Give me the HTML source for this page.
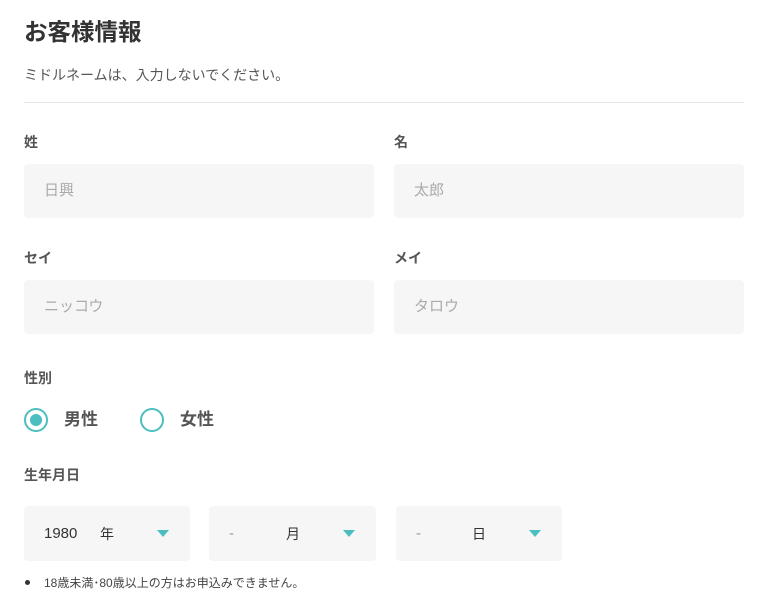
<!DOCTYPE html>
<html><head><meta charset="utf-8"><style>
*{margin:0;padding:0;box-sizing:border-box}
body{width:783px;height:601px;background:#fff;font-family:"Liberation Sans","Noto Sans CJK JP",sans-serif;color:#333;position:relative;overflow:hidden}
.a{position:absolute;white-space:nowrap}
.lbl{font-size:14px;font-weight:bold;color:#555;line-height:20px}
.in{position:absolute;background:#f6f6f6;border-radius:4px;height:54px}
.ph{position:absolute;font-size:15px;color:#aaa;line-height:20px;top:17px;left:20px}
.tri{position:absolute;width:0;height:0;border-left:6px solid transparent;border-right:6px solid transparent;border-top:7px solid #4bbfbf;top:24px}
.sv{position:absolute;font-size:15px;color:#333;line-height:20px;top:18px}
</style></head><body>
<div class="a" style="left:24px;top:17px;font-size:23.5px;font-weight:bold;color:#333;line-height:30px">お客様情報</div>
<div class="a" style="left:24px;top:65px;font-size:14px;color:#555;line-height:20px">ミドルネームは、入力しないでください。</div>
<div class="a" style="left:24px;top:102px;width:720px;height:1px;background:#e8e8e8"></div>

<div class="a lbl" style="left:24px;top:132px">姓</div>
<div class="a lbl" style="left:394px;top:132px">名</div>
<div class="in" style="left:24px;top:164px;width:350px"><span class="ph">日興</span></div>
<div class="in" style="left:394px;top:164px;width:350px"><span class="ph">太郎</span></div>

<div class="a lbl" style="left:24px;top:248px">セイ</div>
<div class="a lbl" style="left:394px;top:248px">メイ</div>
<div class="in" style="left:24px;top:280px;width:350px"><span class="ph">ニッコウ</span></div>
<div class="in" style="left:394px;top:280px;width:350px"><span class="ph">タロウ</span></div>

<div class="a lbl" style="left:24px;top:368px">性別</div>
<div class="a" style="left:24px;top:408px;width:24px;height:24px;border:2px solid #4bbfbf;border-radius:50%"></div>
<div class="a" style="left:30px;top:414px;width:12px;height:12px;background:#4bbfbf;border-radius:50%"></div>
<div class="a" style="left:64px;top:408px;font-size:17px;font-weight:bold;color:#555;line-height:24px">男性</div>
<div class="a" style="left:140px;top:408px;width:24px;height:24px;border:2px solid #4bbfbf;border-radius:50%"></div>
<div class="a" style="left:180px;top:408px;font-size:17px;font-weight:bold;color:#555;line-height:24px">女性</div>

<div class="a lbl" style="left:24px;top:465px">生年月日</div>
<div class="in" style="left:24px;top:506px;width:166px;height:55px"><span class="sv" style="left:20px">1980</span><span class="sv" style="left:76px;font-size:14px">年</span><span class="tri" style="left:133px"></span></div>
<div class="in" style="left:209px;top:506px;width:167px;height:55px"><span class="sv" style="left:20px;color:#999">-</span><span class="sv" style="left:77px;font-size:14px">月</span><span class="tri" style="left:134px"></span></div>
<div class="in" style="left:396px;top:506px;width:166px;height:55px"><span class="sv" style="left:20px;color:#999">-</span><span class="sv" style="left:76px;font-size:14px">日</span><span class="tri" style="left:133px"></span></div>

<div class="a" style="left:25px;top:580px;width:5px;height:5px;background:#333;border-radius:50%"></div>
<div class="a" style="left:44px;top:575px;font-size:12px;color:#444;line-height:16px">18歳未満･80歳以上の方はお申込みできません。</div>
</body></html>
